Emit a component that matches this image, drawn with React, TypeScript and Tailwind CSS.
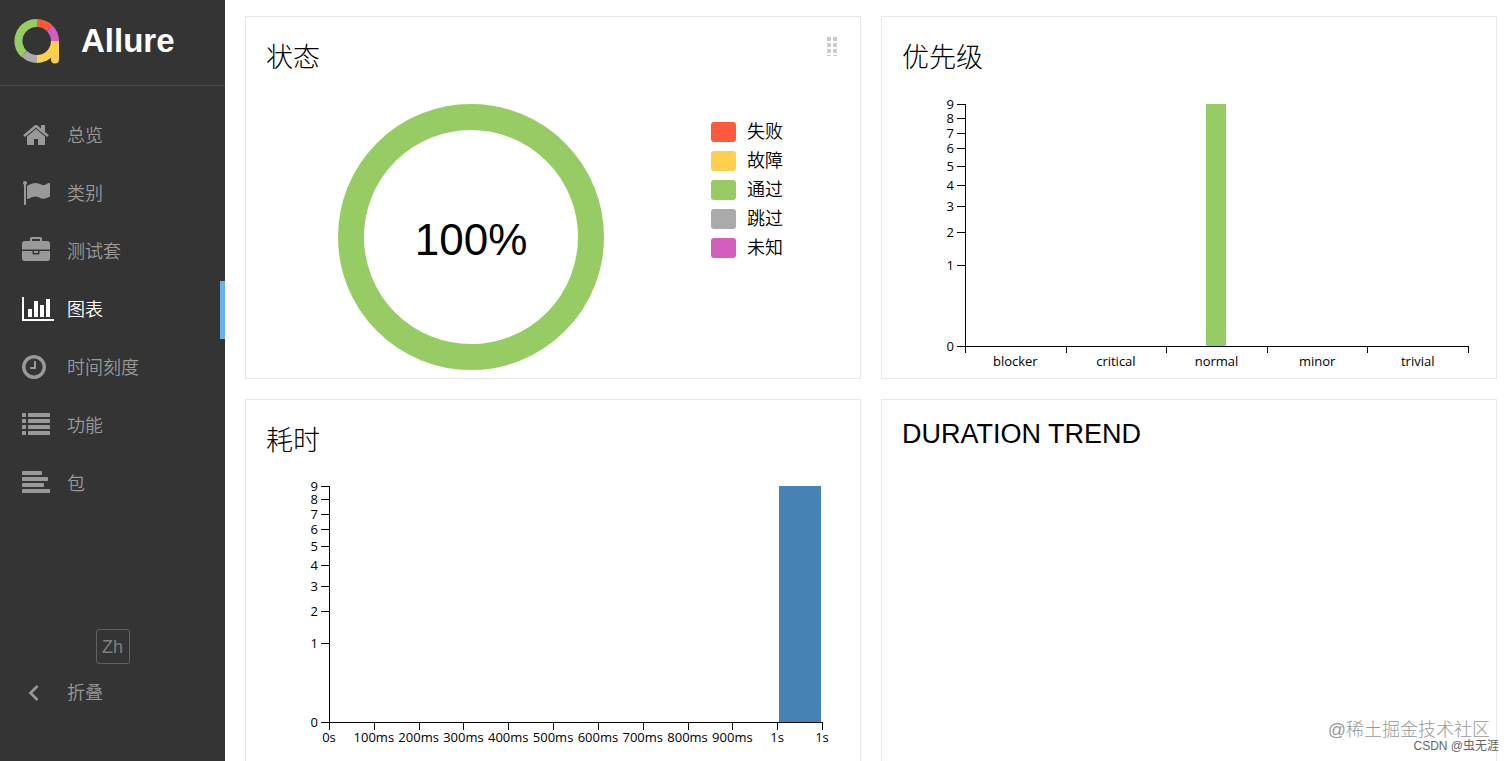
import React from "react";

type NavItem = {
  label: string;
  icon: React.ReactNode;
  active?: boolean;
};

type Tick = {
  at: number;
  label?: string;
};

type BarChartProps = {
  title: string;
  top: number;
  bottom: number;
  right: number;
  ticks: Tick[];
  labels: Tick[];
  tickSize: number;
  bar: { x: number; width: number; className: string };
};

type IconProps = {
  viewBox?: string;
  width?: number;
  children: React.ReactNode;
};

const AXIS_LEFT = 83;
const MAX_COUNT = 9;

const Icon: React.FC<IconProps> = ({
  viewBox = "0 0 1792 1792",
  width = 28,
  children,
}) => (
  <svg
    width={width}
    height={28}
    viewBox={viewBox}
    fill="currentColor"
    aria-hidden="true"
  >
    {children}
  </svg>
);

const navItems: NavItem[] = [
  {
    label: "总览",
    icon: (
      <Icon>
        <path d="M1472 992v480q0 26-19 45t-45 19h-384v-384h-256v384h-384q-26 0-45-19t-19-45v-480q0-1 .5-3t.5-3l575-474 575 474q1 2 1 6zm223-69l-62 74q-8 9-21 11h-3q-13 0-21-7l-692-577-692 577q-12 8-24 7-13-2-21-11l-62-74q-8-10-7-23.5t11-21.5l719-599q32-26 76-26t76 26l244 204v-195q0-14 9-23t23-9h192q14 0 23 9t9 23v408l219 182q10 8 11 21.5t-7 23.5z" />
      </Icon>
    ),
  },
  {
    label: "类别",
    icon: (
      <Icon>
        <path d="M320 256q0 72-64 110v1266q0 13-9.500 22.500t-22.500 9.500h-64q-13 0-22.500-9.500t-9.500-22.500v-1266q-64-38-64-110 0-53 37.500-90.500t90.500-37.500 90.500 37.500 37.500 90.500zm1472 64v763q0 25-12.500 38.500t-39.500 27.500q-215 116-369 116-61 0-123.500-22t-108.500-48-115.500-48-142.500-22q-192 0-464 146-17 9-33 9-26 0-45-19t-19-45v-742q0-32 31-55 21-14 79-43 236-120 421-120 107 0 200 29t219 88q38 19 88 19 54 0 117.500-21t110-47 88-47 54.500-21q26 0 45 19t19 45z" />
      </Icon>
    ),
  },
  {
    label: "测试套",
    icon: (
      <Icon>
        <path d="M640 256h512v-128h-512v128zm1152 640v480q0 66-47 113t-113 47h-1472q-66 0-113-47t-47-113v-480h672v160q0 26 19 45t45 19h320q26 0 45-19t19-45v-160h672zm-768 0v128h-256v-128h256zm768-480v384h-1792v-384q0-66 47-113t113-47h352v-160q0-40 28-68t68-28h576q40 0 68 28t28 68v160h352q66 0 113 47t47 113z" />
      </Icon>
    ),
  },
  {
    label: "图表",
    active: true,
    icon: (
      <Icon viewBox="0 0 2048 1792" width={32}>
        <path d="M640 896v512h-256v-512h256zm384-512v1024h-256v-1024h256zm1024 1152v128h-2048v-1536h128v1408h1920zm-640-896v768h-256v-768h256zm384-384v1152h-256v-1152h256z" />
      </Icon>
    ),
  },
  {
    label: "时间刻度",
    icon: (
      <Icon viewBox="128 0 1536 1792" width={24}>
        <path d="M1024 544v448q0 14-9 23t-23 9h-320q-14 0-23-9t-9-23v-64q0-14 9-23t23-9h224v-352q0-14 9-23t23-9h64q14 0 23 9t9 23zm416 352q0-148-73-273t-198-198-273-73-273 73-198 198-73 273 73 273 198 198 273 73 273-73 198-198 73-273zm224 0q0 209-103 385.500t-279.500 279.500-385.500 103-385.500-103-279.500-279.500-103-385.500 103-385.500 279.500-279.500 385.500-103 385.500 103 279.500 279.500 103 385.500z" />
      </Icon>
    ),
  },
  {
    label: "功能",
    icon: (
      <Icon>
        {[128, 512, 896, 1280].map((y) => (
          <g key={y}>
            <rect x="0" y={y} width="256" height="256" rx="32" />
            <rect x="384" y={y} width="1408" height="256" rx="32" />
          </g>
        ))}
      </Icon>
    ),
  },
  {
    label: "包",
    icon: (
      <Icon>
        <rect y="128" width="1280" height="256" rx="56" />
        <rect y="512" width="1664" height="256" rx="56" />
        <rect y="896" width="1408" height="256" rx="56" />
        <rect y="1280" width="1792" height="256" rx="56" />
      </Icon>
    ),
  },
];

const statuses = [
  { label: "失败", color: "bg-[#fd5a3e]" },
  { label: "故障", color: "bg-[#ffd050]" },
  { label: "通过", color: "bg-[#97cc64]" },
  { label: "跳过", color: "bg-[#aaaaaa]" },
  { label: "未知", color: "bg-[#d35ebe]" },
];

const severities = ["blocker", "critical", "normal", "minor", "trivial"];
const severityStep = (586 - AXIS_LEFT) / severities.length;

const durations = [
  "0s",
  "100ms",
  "200ms",
  "300ms",
  "400ms",
  "500ms",
  "600ms",
  "700ms",
  "800ms",
  "900ms",
  "1s",
  "1s",
];
const durationTicks: Tick[] = durations.map((label, index) => ({
  at: AXIS_LEFT + (index * (576 - AXIS_LEFT)) / (durations.length - 1),
  label,
}));

const Logo: React.FC = () => (
  <svg width="46" height="46" viewBox="0 0 46 46" fill="none" aria-hidden="true">
    <g strokeWidth="8">
      <path d="M10 36A18 18 0 0 1 23 5" stroke="#97cc64" />
      <path d="M23 5A18 18 0 0 1 35.700 10.300" stroke="#fd5a3e" />
      <path d="M35.700 10.300A18 18 0 0 1 41 23" stroke="#d35ebe" />
      <path d="M23 41A18 18 0 0 1 10.300 35.700" stroke="#aaaaaa" />
      <path d="M41 23A18 18 0 0 1 23 41" stroke="#ffd050" />
    </g>
    <path d="M37 23h8v18.500a4 4 0 0 1-8 0z" fill="#ffd050" />
  </svg>
);

const Card: React.FC<{
  title: string;
  handle?: boolean;
  children?: React.ReactNode;
}> = ({ title, handle, children }) => (
  <section className="min-h-[363px] border border-[#e8e8e8] bg-white">
    <header className="flex items-start justify-between px-5 pt-[19px]">
      <h2 className="text-[27px] leading-[normal] font-light">{title}</h2>
      {handle ? (
        <svg width="14" height="21" viewBox="0 0 14 21" aria-hidden="true">
          {[1, 7, 13, 19].map((y) => (
            <g key={y} fill="#cccccc">
              <rect x="1" y={y} width="4" height={y === 19 ? 1 : 4} />
              <rect x="7" y={y} width="4" height={y === 19 ? 1 : 4} />
            </g>
          ))}
        </svg>
      ) : null}
    </header>
    {children}
  </section>
);

const BarChart: React.FC<BarChartProps> = ({
  title,
  top,
  bottom,
  right,
  ticks,
  labels,
  tickSize,
  bar,
}) => {
  // counts are drawn on a square-root scale
  const scaleY = (count: number) =>
    Math.round(bottom - (bottom - top) * Math.sqrt(count / MAX_COUNT));

  return (
    <svg
      className="block h-auto w-full font-['Open_Sans','Noto_Sans',sans-serif] text-[13px]"
      viewBox="0 0 614 302"
      role="img"
      aria-label={title}
    >
      <rect
        x={bar.x}
        y={top}
        width={bar.width}
        height={bottom - top}
        className={bar.className}
      />
      <g stroke="#000" fill="none" shapeRendering="crispEdges">
        <path d={`M${AXIS_LEFT + 0.5} ${top}V${bottom}`} />
        <path d={`M${AXIS_LEFT} ${bottom + 0.5}H${right + 1}`} />
        {Array.from({ length: MAX_COUNT + 1 }, (_, count) => (
          <path
            key={count}
            d={`M${AXIS_LEFT - 8} ${scaleY(count) + 0.5}h8`}
          />
        ))}
        {ticks.map((tick) => (
          <path
            key={tick.at}
            d={`M${Math.round(tick.at) + 0.5} ${bottom}v${tickSize}`}
          />
        ))}
      </g>
      <g textAnchor="end">
        {Array.from({ length: MAX_COUNT + 1 }, (_, count) => (
          <text key={count} x={AXIS_LEFT - 11} y={scaleY(count) + 5}>
            {count}
          </text>
        ))}
      </g>
      <g textAnchor="middle">
        {labels.map((item) => (
          <text key={item.at} x={item.at} y={bottom + 20}>
            {item.label}
          </text>
        ))}
      </g>
    </svg>
  );
};

const Sidebar: React.FC = () => (
  <aside className="flex w-[225px] shrink-0 flex-col bg-[#343434] text-lg font-[350] text-[#999999]">
    <a
      href="#"
      className="flex h-[86px] items-start gap-[21px] border-b border-[#484848] pt-[18px] pl-[14px] text-white"
    >
      <Logo />
      <span className="text-[33px] leading-[46px] font-bold">Allure</span>
    </a>
    <nav className="pt-[21px]">
      <ul>
        {navItems.map((item) => (
          <li key={item.label}>
            <a
              href="#"
              aria-current={item.active ? "page" : undefined}
              className={`flex h-[58px] items-center border-r-[5px] pl-[22px] ${
                item.active
                  ? "border-[#68b0ee] text-white"
                  : "border-transparent"
              }`}
            >
              <span className="w-[45px] pb-[3px]">{item.icon}</span>
              {item.label}
            </a>
          </li>
        ))}
      </ul>
    </nav>
    <div className="mt-auto flex flex-col pb-[39px]">
      <button
        type="button"
        className="h-[35px] w-[34px] self-center rounded-[3px] border border-[#606060] font-normal text-[#808080]"
      >
        Zh
      </button>
      <button type="button" className="flex h-[58px] items-center pl-[22px]">
        <span className="w-[45px]">
          <svg
            width="24"
            height="20"
            viewBox="0 0 24 20"
            fill="none"
            stroke="currentColor"
            strokeWidth="2.600"
            aria-hidden="true"
          >
            <path d="M15.500 3L8.500 10l7 7" />
          </svg>
        </span>
        折叠
      </button>
    </div>
  </aside>
);

const App: React.FC = () => {
  return (
    <div className="relative flex h-screen overflow-hidden bg-white font-['Liberation_Sans','Noto_Sans_CJK_SC',sans-serif] text-black">
      <Sidebar />

      <main className="grid flex-1 auto-rows-max grid-cols-2 gap-5 overflow-hidden pt-4 pr-[15px] pl-5">
        <Card title="状态" handle>
          <div className="flex items-start">
            <div className="flex flex-1 justify-center pt-7 pr-4">
              <svg
                width="268"
                height="268"
                viewBox="0 0 268 268"
                role="img"
                aria-label="状态"
              >
                <circle
                  cx="134"
                  cy="134"
                  r="120"
                  fill="none"
                  stroke="#97cc64"
                  strokeWidth="26"
                />
                <text
                  x="134"
                  y="152"
                  textAnchor="middle"
                  className="text-[44px]"
                >
                  100%
                </text>
              </svg>
            </div>
            <ul className="w-[149px] pt-[42px] text-lg font-[350]">
              {statuses.map((status) => (
                <li
                  key={status.label}
                  className="flex h-[29px] items-center gap-[11px]"
                >
                  <span className={`h-5 w-[25px] rounded-[3px] ${status.color}`} />
                  {status.label}
                </li>
              ))}
            </ul>
          </div>
        </Card>

        <Card title="优先级">
          <BarChart
            title="优先级"
            top={29}
            bottom={271}
            right={586}
            tickSize={7}
            ticks={Array.from({ length: severities.length + 1 }, (_, index) => ({
              at: AXIS_LEFT + index * severityStep,
            }))}
            labels={severities.map((label, index) => ({
              at: AXIS_LEFT + (index + 0.5) * severityStep,
              label,
            }))}
            bar={{ x: 324, width: 20, className: "fill-[#97cc64]" }}
          />
        </Card>

        <Card title="耗时">
          <BarChart
            title="耗时"
            top={28}
            bottom={264}
            right={576}
            tickSize={8}
            ticks={durationTicks}
            labels={durationTicks}
            bar={{ x: 533, width: 42, className: "fill-[#4682b4]" }}
          />
        </Card>

        <Card title="DURATION TREND" />
      </main>

      <p className="absolute right-[22px] bottom-[18px] text-lg leading-[26px] font-light text-[#999999]">
        @稀土掘金技术社区
      </p>
      <p className="absolute right-[13px] bottom-[6px] text-xs leading-[18px] text-[#666666]">
        CSDN @虫无涯
      </p>
    </div>
  );
};

export default App;
